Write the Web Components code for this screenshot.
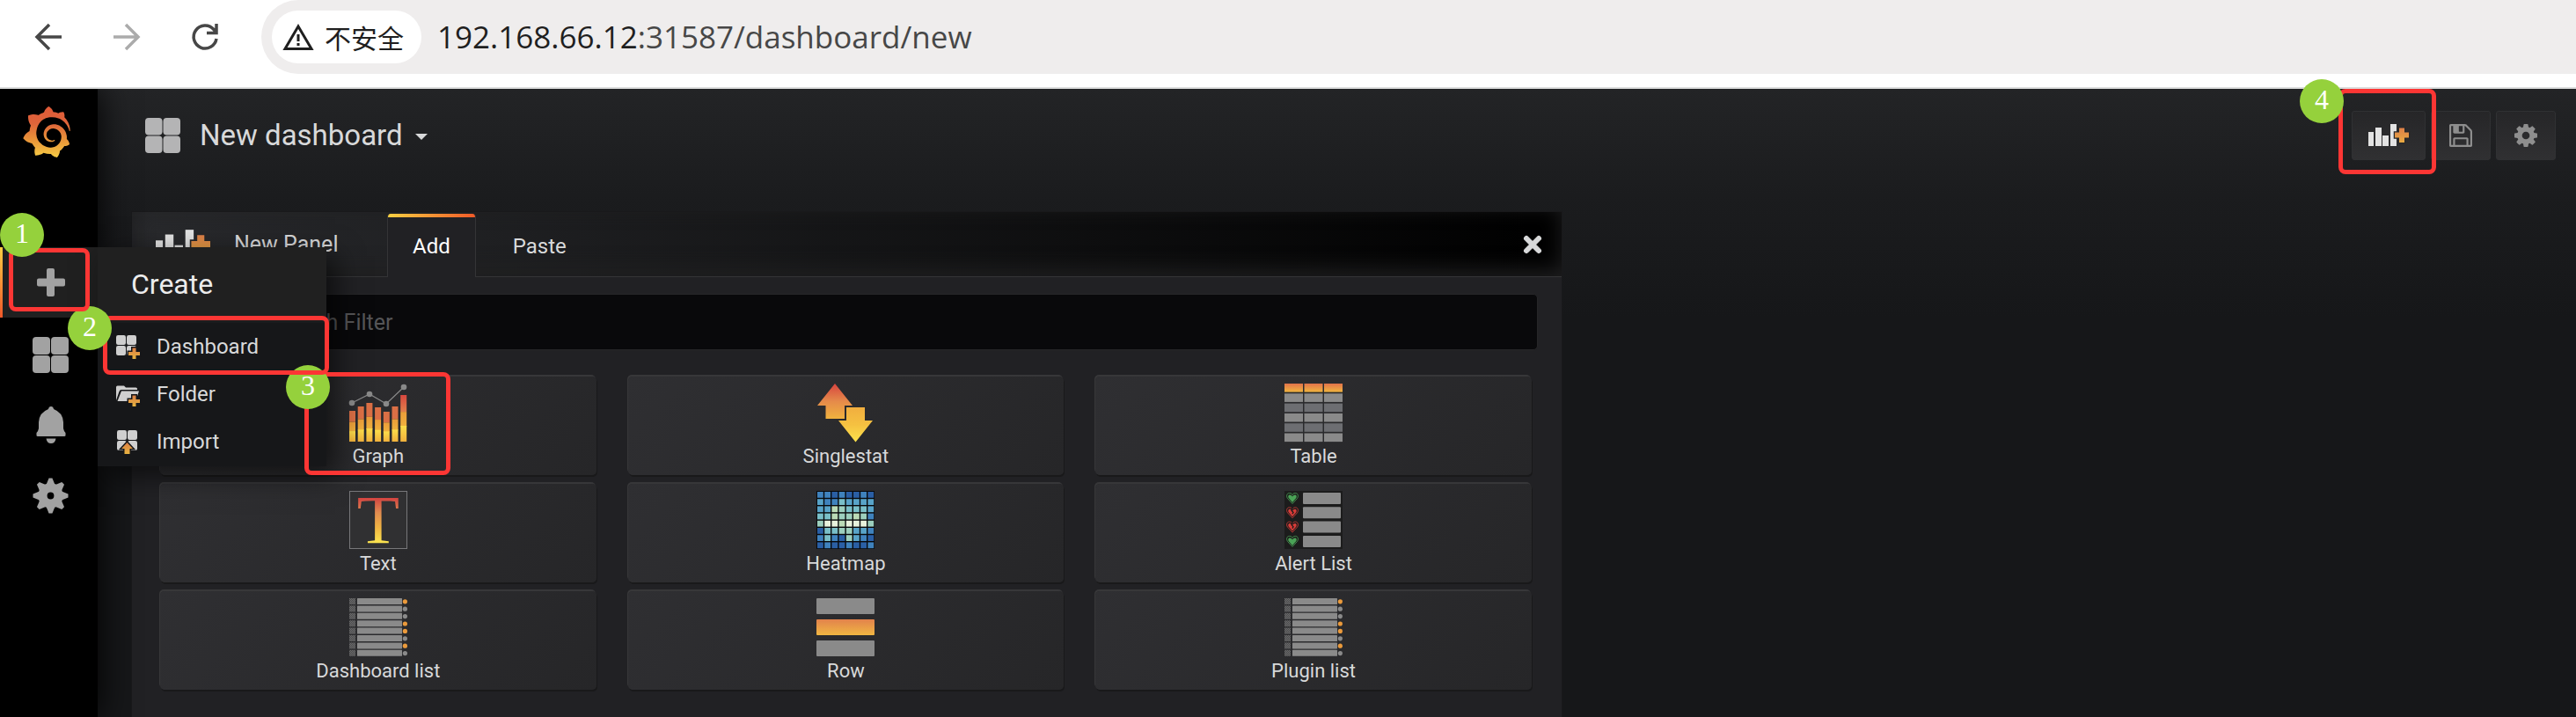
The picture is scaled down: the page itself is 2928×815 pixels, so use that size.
<!DOCTYPE html>
<html lang="en">
<head>
<meta charset="utf-8">
<title>New dashboard</title>
<style>
  body {
    margin: 0;
    background: #161719;
    font-family: Roboto, "Liberation Sans", sans-serif;
    color: #d8d9da;
  }
</style>
</head>
<body>
<dashboard-app></dashboard-app>

<script>
const GEAR = 'M1024 896q0-106-75-181t-181-75-181 75-75 181 75 181 181 75 181-75 75-181zm512-109v222q0 12-8 23t-20 13l-185 28q-19 54-39 91 35 50 107 138 10 12 10 25t-9 23q-27 37-99 108t-94 71q-12 0-26-9l-138-108q-44 23-91 38-16 136-29 186-7 28-36 28h-222q-14 0-24.5-8.5t-11.5-21.5l-28-184q-49-16-90-37l-141 107q-10 9-25 9-14 0-25-11-126-114-165-168-7-10-7-23 0-12 8-23 15-21 51-66.5t54-70.5q-27-50-41-99l-183-27q-13-2-21-12.5t-8-23.5v-222q0-12 8-23t19-13l186-28q14-46 39-92-40-57-107-138-10-12-10-24 0-10 9-23 26-36 98.5-107.5t94.5-71.5q13 0 26 10l138 107q44-23 91-38 16-136 29-186 7-28 36-28h222q14 0 24.5 8.5t11.5 21.5l28 184q49 16 90 37l142-107q9-9 24-9 13 0 25 10 129 119 165 170 7 8 7 22 0 12-8 23-15 21-51 66.5t-54 70.5q26 50 41 98l183 28q13 2 21 12.5t8 23.5z';

const FLOPPY = 'M384 1536h768v-384h-768v384zm896 0h128v-896q0-14-10-38.5t-20-34.5l-281-281q-10-10-34-20t-39-10v416q0 40-28 68t-68 28h-576q-40 0-68-28t-28-68v-416h-128v1280h128v-416q0-40 28-68t68-28h832q40 0 68 28t28 68v416zm-384-928v-320q0-13-9.5-22.5t-22.5-9.5h-192q-13 0-22.5 9.5t-9.5 22.5v320q0 13 9.5 22.5t22.5 9.5h192q13 0 22.5-9.5t9.5-22.5zm640 32v928q0 40-28 68t-68 28h-1344q-40 0-68-28t-28-68v-1344q0-40 28-68t68-28h928q40 0 88 20t76 48l280 280q28 28 48 76t20 88z';

const LOGO = 'M23.02 10.59a8.578 8.578 0 0 0-.862-3.034 8.911 8.911 0 0 0-1.789-2.445c.337-1.342-.413-2.505-.413-2.505-1.292-.08-2.113.4-2.416.62-.052-.02-.102-.044-.154-.064-.22-.089-.446-.172-.677-.247-.231-.073-.47-.14-.711-.197a9.867 9.867 0 0 0-.875-.161C14.557.753 12.94 0 12.94 0c-1.804 1.145-2.147 2.744-2.147 2.744l-.018.093c-.098.029-.2.057-.298.088-.138.042-.275.094-.413.143-.138.055-.275.107-.41.166a8.869 8.869 0 0 0-1.557.87l-.063-.029c-2.497-.955-4.716.195-4.716.195-.203 2.658.996 4.33 1.235 4.636a11.608 11.608 0 0 0-.607 2.635C1.636 12.677.953 15.014.953 15.014c1.926 2.214 4.171 2.351 4.171 2.351.003-.002.006-.002.006-.005.285.509.615.994.986 1.446.156.19.32.371.488.548-.704 2.009.099 3.68.099 3.68 2.144.08 3.553-.937 3.849-1.173a9.784 9.784 0 0 0 3.164.501h.08l.055-.003.107-.002.103-.005.003.002c1.01 1.44 2.788 1.646 2.788 1.646 1.264-1.332 1.337-2.653 1.337-2.94v-.058c0-.02-.003-.039-.003-.06.265-.187.52-.387.758-.6a7.875 7.875 0 0 0 1.415-1.7c1.43.083 2.437-.885 2.437-.885-.236-1.49-1.085-2.216-1.264-2.354l-.018-.013-.016-.013a.217.217 0 0 1-.031-.02c.008-.092.016-.18.02-.27.011-.162.016-.323.016-.48v-.253l-.005-.098-.008-.135a1.891 1.891 0 0 0-.01-.13c-.003-.042-.008-.083-.013-.125l-.016-.124-.018-.122a6.215 6.215 0 0 0-2.032-3.73 6.015 6.015 0 0 0-3.222-1.46 6.292 6.292 0 0 0-.85-.048l-.107.002h-.063l-.044.003-.104.008a4.777 4.777 0 0 0-3.335 1.695c-.332.4-.592.84-.768 1.297a4.594 4.594 0 0 0-.312 1.817l.003.091c.005.055.007.11.013.164a3.615 3.615 0 0 0 .698 1.82 3.53 3.53 0 0 0 1.827 1.282c.33.098.66.14.971.137.039 0 .078 0 .114-.002l.063-.003c.02 0 .041-.003.062-.003.034-.002.065-.007.099-.01.007 0 .018-.003.028-.003l.031-.005.06-.008a1.18 1.18 0 0 0 .112-.02c.036-.008.072-.013.109-.024a2.634 2.634 0 0 0 .914-.415c.028-.02.056-.041.085-.065a.248.248 0 0 0 .039-.35.244.244 0 0 0-.309-.06l-.078.042c-.09.044-.184.083-.283.116a2.476 2.476 0 0 1-.475.096c-.028.003-.054.006-.083.006l-.083.002c-.026 0-.054 0-.08-.002l-.102-.006h-.012l-.024.006c-.016-.003-.031-.003-.044-.006-.031-.002-.06-.007-.091-.01a2.59 2.59 0 0 1-.724-.213 2.557 2.557 0 0 1-.667-.438 2.52 2.52 0 0 1-.805-1.475 2.306 2.306 0 0 1-.029-.444l.006-.122v-.023l.002-.031c.003-.021.003-.04.005-.06a3.163 3.163 0 0 1 1.352-2.29 3.12 3.12 0 0 1 .937-.43 2.946 2.946 0 0 1 .776-.101h.06l.07.002.045.003h.026l.07.005a4.041 4.041 0 0 1 1.635.49 3.94 3.94 0 0 1 1.602 1.662 3.77 3.77 0 0 1 .397 1.414l.005.076.003.075c.002.026.002.05.002.075 0 .024.003.052 0 .07v.065l-.002.073-.008.174a6.195 6.195 0 0 1-.08.639 5.1 5.1 0 0 1-.267.927 5.31 5.31 0 0 1-.624 1.13 5.052 5.052 0 0 1-3.237 2.014 4.82 4.82 0 0 1-.649.066l-.039.003h-.287a6.607 6.607 0 0 1-1.716-.265 6.776 6.776 0 0 1-3.4-2.274 6.75 6.75 0 0 1-.746-1.15 6.616 6.616 0 0 1-.714-2.596l-.005-.083-.002-.02v-.056l-.003-.073v-.096l-.003-.104v-.07l.003-.163c.008-.22.026-.45.054-.678a8.707 8.707 0 0 1 .28-1.355c.128-.444.286-.872.473-1.277a7.04 7.04 0 0 1 1.456-2.1 5.925 5.925 0 0 1 .953-.763c.169-.111.343-.213.524-.306.089-.05.182-.091.273-.135.047-.02.093-.042.138-.062a7.177 7.177 0 0 1 .714-.267l.145-.045c.049-.015.098-.026.148-.041.098-.029.197-.052.296-.076.049-.013.1-.02.15-.033l.15-.032.151-.028.076-.013.075-.01.153-.024c.057-.01.114-.013.171-.023l.169-.021c.036-.003.073-.008.106-.01l.073-.008.036-.003.042-.002c.057-.003.114-.008.171-.01l.086-.006h.023l.037-.003.145-.007a7.999 7.999 0 0 1 1.708.125 7.917 7.917 0 0 1 2.048.68 8.253 8.253 0 0 1 1.672 1.09l.09.077.089.078c.06.052.114.107.171.159.057.052.112.106.166.16.052.055.107.107.159.164a8.671 8.671 0 0 1 1.41 1.978c.012.026.028.052.04.078l.04.078.075.156c.023.051.05.1.07.153l.065.15a8.848 8.848 0 0 1 .45 1.34.19.19 0 0 0 .201.142.186.186 0 0 0 .172-.184c.01-.246.002-.532-.024-.856z';

const stops = (colors) =>
  colors.map((c, i) => `<stop offset="${i / (colors.length - 1)}" stop-color="${c}"/>`).join('');

// gradients are repeated in every icon because ids do not cross shadow roots
const gradient = (id, ...colors) =>
  `<linearGradient id="${id}" x1="0" y1="0" x2="0" y2="1">${stops(colors)}</linearGradient>`;

const rect = (x, y, w, h, fill, extra = '') =>
  `<rect x="${x}" y="${y}" width="${w}" height="${h}" fill="${fill}" ${extra}/>`;

const squares = (size, gap, fill) => [[0, 0], [1, 0], [0, 1], [1, 1]].map(([x, y]) =>
  rect(x * (size + gap), y * (size + gap), size, size, fill, `rx="${size / 5}"`)).join('');

const spokes = () => {
  let out = '';
  for (let i = 0; i < 8; i++) {
    out += `<path d="M16 8 L19 0.5 H23 L26 8 Z" transform="rotate(${i * 45} 21 21)"/>`;
  }
  return out;
};

const graphIcon = () => {
  const tops = [31, 26, 22, 27, 32, 26, 13];
  let out = gradient('low', '#fbdd4a', '#f1b13c') + gradient('mid', '#eb9c39', '#f0b23e') + gradient('high', '#d8473f', '#e2804b');
  tops.forEach((top, i) => {
    const x = i * 9.7;
    const h = 66 - top;
    out += rect(x, top, 7, h * 0.36, i === 6 ? 'url(#high)' : '#db6f45');
    out += rect(x, top + h * 0.36, 7, h * 0.32, 'url(#mid)');
    out += rect(x, top + h * 0.66, 7, h * 0.34, 'url(#low)');
  });
  out += '<path d="M3 22 L23 12 L42 23 L62 4" fill="none" stroke="#898989" stroke-width="1.2"/>';
  [[3, 22], [23, 12], [42, 23], [62, 4]].forEach(([x, y]) => {
    out += `<circle cx="${x}" cy="${y}" r="3.3" fill="#898989"/>`;
  });
  return out;
};

const tableIcon = () => {
  let out = gradient('g', '#e2734b', '#f0b43f');
  for (let row = 0; row < 6; row++) {
    for (let col = 0; col < 3; col++) {
      const fill = row === 0 ? 'url(#g)' : row % 2 ? '#8a8a8a' : '#6d6e72';
      out += rect(col * 22.5, row * 11.3, 21, 9.6, fill);
    }
  }
  return out;
};

const heatmapIcon = () => {
  const shades = ['#2a5fa5', '#3f82bd', '#58a3c8', '#79bfc8', '#9ccfbd', '#bbdbb6', '#e8f2dc'];
  const cells = ['11010010', '21132222', '22543332', '33544541', '46656664', '03344221', '13104210', '01001001'];
  let out = rect(0, 0, 66, 66, '#08090b');
  cells.forEach((line, y) => {
    [...line].forEach((n, x) => {
      out += rect(x * 8.2 + 1, y * 8.2 + 1, 6.8, 6.8, shades[n]);
    });
  });
  return out;
};

const alertIcon = () => {
  let out = rect(0, 0, 66, 66, '#1c1c1c');
  ['#4aa356', '#d63c38', '#d63c38', '#4aa356'].forEach((color, i) => {
    const y = i * 16.3;
    out += rect(21, y + 2, 43, 13, '#8a8a8a', 'rx="1"');
    out += `<g transform="translate(2 ${y + 2})">
      <path d="M7 12.5 L1.5 6.5 C-.5 3.5 1 .5 3.5 .5 C5.5 .5 6.5 1.5 7 2.5 C7.5 1.5 8.5 .5 10.5 .5 C13 .5 14.5 3.5 12.5 6.5Z" fill="none" stroke="${color}" stroke-width=".8"/>
      <path d="M7 11 L3 6.5 C1.5 4.5 2.5 2.5 4 2.5 C5.5 2.5 6.5 3.5 7 4.5 C7.5 3.5 8.5 2.5 10 2.5 C11.5 2.5 12.5 4.5 11 6.5Z" fill="${color}"/>
      ${color === '#d63c38' ? '<path d="M7 1 L6 4 L8 6 L7 8" fill="none" stroke="#1c1c1c" stroke-width="1.3"/>' : ''}
    </g>`;
  });
  return out;
};

const listIcon = () => {
  let out = '<pattern id="dots" width="2" height="2" patternUnits="userSpaceOnUse"><rect width="2" height="2" fill="#484849"/><rect width="1" height="1" fill="#6c6c6d"/><rect x="1" y="1" width="1" height="1" fill="#6c6c6d"/></pattern>';
  [1, 0, 0, 1, 1, 0, 1, 0].forEach((on, i) => {
    const y = i * 8.4;
    out += rect(0, y, 7, 7, 'url(#dots)');
    out += rect(9, y, 51, 7, '#8a8a8a', 'rx=".6"');
    out += `<circle cx="63.4" cy="${y + 3.8}" r="2.6" fill="${on ? '#eb9a3b' : '#8a8a8a'}"/>`;
  });
  return out;
};

// name: [viewBox, markup]
const icons = {
  back: ['0 0 30 30', '<path d="M30 15H3M16 1 L2 15 L16 29" fill="none" stroke="#474747" stroke-width="3.5"/>'],
  forward: ['0 0 30 30', '<path d="M0 15H27M14 1 L28 15 L14 29" fill="none" stroke="#ababab" stroke-width="3.5"/>'],
  reload: ['0 0 30 30', '<path d="M28 17 A13 13 0 1 1 25 6.5 L28 10M28 0V10.5H17" fill="none" stroke="#474747" stroke-width="3.5"/>'],
  warning: ['0 0 36 32', '<path d="M18 4 L33 29.5 H3Z" fill="none" stroke="#1f1f1f" stroke-width="3"/><path d="M18 13V21M18 23V26" stroke="#1f1f1f" stroke-width="3"/>'],
  logo: ['0.9 0 22.2 24', gradient('g', '#e05a38', '#de643a', '#e99639', '#f7cd45') + `<path fill="url(#g)" d="${LOGO}"/>`],
  plus: ['0 0 32 32', '<path d="M11 2Q11 0 13 0H18Q20 0 20 2V11.5H30Q32 11.5 32 13.5V18.5Q32 20.5 30 20.5H20V30Q20 32 18 32H13Q11 32 11 30V20.5H2Q0 20.5 0 18.5V13.5Q0 11.5 2 11.5H11Z" fill="#a2a2a2"/>'],
  apps: ['0 0 41 41', squares(20, 1, 'currentColor')],
  bell: ['0 0 34 42', '<path d="M17 0Q19.5 0 20 3Q30.5 7 31 18V25Q31.5 28 33.5 30V33Q33.5 34 32 34H2Q.5 34 .5 33V30Q2.5 28 3 25V18Q3.5 7 14 3Q14.5 0 17 0ZM11.5 36.5H22.5Q21.5 42 17 42T11.5 36.5Z" fill="#a2a2a2"/>'],
  cog: ['0 0 42 42', `<g fill="#a2a2a2">${spokes()}<path fill-rule="evenodd" d="M21 6.5a14.5 14.5 0 1 0 0 29a14.5 14.5 0 1 0 0-29zM21 17a4 4 0 1 1 0 8a4 4 0 1 1 0-8z"/></g>`],
  gear: ['0 128 1536 1536', `<path fill="#8e8e8e" d="${GEAR}"/>`],
  save: ['0 128 1536 1536', `<path fill="#8e8e8e" d="${FLOPPY}"/>`],
  close: ['0 0 22 22', '<path d="M4 4 L18 18 M18 4 L4 18" stroke="#d8d9da" stroke-width="6" stroke-linecap="round"/>'],
  'add-panel': ['0 0 46 25', gradient('g', '#de8048', '#e9aa42') +
    rect(0, 9, 6, 16, '#e3e3e3') + rect(8, 4, 7, 21, '#e3e3e3') + rect(16, 13, 7, 12, '#e3e3e3') + rect(25, 0, 7, 25, '#e3e3e3') +
    '<path d="M35 4.5H41V9.5H46V15.5H41V21H35V15.5H30V9.5H35Z" fill="url(#g)" stroke="#28282a" stroke-width="2.5" paint-order="stroke"/>'],
  'new-dash': ['0 0 27 27', gradient('g', '#dd8045', '#e5b440') + squares(11, 1, '#cfcfcf') +
    '<path d="M18.5 14.5H22.5V19H27V23H22.5V27H18.5V23H14V19H18.5Z" fill="url(#g)" stroke="#161719" stroke-width="3" paint-order="stroke"/>'],
  folder: ['0 0 27 27', gradient('g', '#dd8045', '#e5b440') +
    '<path d="M0 5Q0 3.5 1.5 3.5H9L11 5.5H22.5Q24 5.5 24 7V8H6Q4 8 3.5 10L0 20ZM6 9.5H26L22 21H1.5Z" fill="#cfcfcf"/>' +
    '<path d="M18.5 14.5H22.5V19H27V23H22.5V27H18.5V23H14V19H18.5Z" fill="url(#g)" stroke="#161719" stroke-width="3" paint-order="stroke"/>'],
  import: ['0 0 27 27', gradient('g', '#dd7f45', '#e8b440') + `<g transform="translate(1 0)">${squares(11, 1, '#cfcfcf')}</g>` +
    '<path d="M12.5 14 L19 21H15.5V27H9.5V21H6Z" fill="url(#g)" stroke="#161719" stroke-width="3" paint-order="stroke"/>'],
  graph: ['0 0 66 66', graphIcon()],
  singlestat: ['0 0 66 66', gradient('a', '#d7433f', '#e58a4a', '#f0b23e') + gradient('b', '#f1ae3f', '#f5c141', '#fce24c') +
    '<path d="M21 0 L41 25H32V40H10.5V25H1Z" fill="url(#a)"/><path d="M34 27H55V42H64 L44.5 66.5 L25 42H34Z" fill="url(#b)" stroke="#2a2a2c" stroke-width="3" paint-order="stroke"/>'],
  table: ['0 0 66 66', tableIcon()],
  text: ['0 0 66 66', `<linearGradient id="g" gradientUnits="userSpaceOnUse" x1="0" y1="7" x2="0" y2="59">${stops(['#d23f40', '#e08a50', '#f0b443', '#fbe44f'])}</linearGradient>` +
    rect(0.5, 0.5, 65, 65, '#303032', 'stroke="#77777a"') +
    '<text x="33" y="59" text-anchor="middle" font-family="Liberation Serif, serif" font-size="79" fill="url(#g)">T</text>'],
  heatmap: ['0 0 66 66', heatmapIcon()],
  alert: ['0 0 66 66', alertIcon()],
  list: ['0 0 66 66', listIcon()],
  row: ['0 0 66 66', gradient('g', '#e2824c', '#f0b642') + rect(0, 0, 66, 18, '#8a8a8a', 'rx="1"') + rect(0, 24, 66, 18, 'url(#g)', 'rx="1"') + rect(0, 48, 66, 18, '#8a8a8a', 'rx="1"')]
};

class AppIcon extends HTMLElement {
  connectedCallback() {
    const [box, markup] = icons[this.getAttribute('name')];
    this.attachShadow({ mode: 'open' }).innerHTML = `
      <style>
        :host { display: block; flex: none; }
        svg { display: block; width: 100%; height: 100%; overflow: visible; }
      </style>
      <svg viewBox="${box}" aria-hidden="true">${markup}</svg>
    `;
  }
}

// small helper for the elements that only have static markup
const define = (name, html) => {
  const template = document.createElement('template');
  template.innerHTML = html;

  window.customElements.define(name, class extends HTMLElement {
    constructor() {
      super();
      this.attachShadow({ mode: 'open' });
      this.shadowRoot.appendChild(template.content.cloneNode(true));
    }
  });
};

window.customElements.define('app-icon', AppIcon);

define('browser-bar', `
  <style>
    :host {
      display: flex;
      align-items: flex-start;
      height: 99px;
      padding-left: 40px;
      background: #fff;
      border-bottom: 2px solid #dcdddd;
    }
    .controls { display: flex; gap: 59px; padding: 27px 49px 0 0; }
    button { padding: 0; border: 0; background: none; }
    .controls app-icon { width: 30px; height: 30px; }
    .address {
      display: flex;
      flex: 1;
      align-items: center;
      gap: 18px;
      height: 84px;
      padding-left: 12px;
      box-sizing: border-box;
      background: #efeded;
      border-radius: 42px 0 0 42px;
      font: 35px "Open Sans", "Noto Sans", sans-serif;
      color: #474747;
      white-space: nowrap;
    }
    .address span { padding-bottom: 2px; }
    .safety {
      display: flex;
      align-items: center;
      gap: 12px;
      height: 60px;
      padding: 0 20px 0 12px;
      border-radius: 30px;
      background: #fff;
      font: 30px "Noto Sans CJK SC", sans-serif;
      color: #1f1f1f;
    }
    .safety app-icon { width: 36px; height: 32px; }
    b { font-weight: normal; color: #1f1f1f; }
  </style>
  <div class="controls">
    <button aria-label="Back"><app-icon name="back"></app-icon></button>
    <button aria-label="Forward"><app-icon name="forward"></app-icon></button>
    <button aria-label="Reload"><app-icon name="reload"></app-icon></button>
  </div>
  <div class="address">
    <button class="safety"><app-icon name="warning"></app-icon>不安全</button>
    <span><b>192.168.66.12</b>:31587/dashboard/new</span>
  </div>
`);

define('create-menu', `
  <style>
    :host {
      display: block;
      width: 260px;
      background: #161719;
      box-shadow: 10px 10px 30px rgba(0, 0, 0, .6);
    }
    h2 {
      margin: 0;
      padding: 0 38px;
      background: #202020;
      border-bottom: 2px solid #1b1c1d;
      font-size: 32px;
      font-weight: 400;
      line-height: 84px;
      color: #ececec;
    }
    a {
      display: flex;
      align-items: center;
      gap: 19px;
      height: 54px;
      padding-left: 21px;
      font-size: 24px;
      color: #d8d9da;
      text-decoration: none;
    }
    a app-icon { width: 27px; height: 27px; }
    nav { padding-bottom: 1px; }
  </style>
  <h2>Create</h2>
  <nav>
    <a href="#dashboard"><app-icon name="new-dash"></app-icon>Dashboard</a>
    <a href="#folder"><app-icon name="folder"></app-icon>Folder</a>
    <a href="#import"><app-icon name="import"></app-icon>Import</a>
  </nav>
`);

define('side-nav', `
  <style>
    :host {
      display: block;
      width: 111px;
      background: #000;
      box-shadow: 0 0 36px #000;
      color: #a2a2a2;
    }
    a {
      display: flex;
      align-items: center;
      justify-content: center;
      height: 80px;
      padding-left: 4px;
      color: inherit;
    }
    .logo { height: 160px; padding: 20px 6px 0 0; align-items: flex-start; }
    .logo app-icon { width: 54px; height: 58px; }
    .item { position: relative; margin-bottom: 2px; }
    .active {
      background: #202020;
      border-left: 3px solid;
      border-image: linear-gradient(#fbd043, #f0562a) 1;
      padding-left: 1px;
    }
    .square { width: 41px; height: 41px; }
    .plus { width: 32px; height: 32px; }
    .bell { width: 34px; height: 42px; }
    create-menu { position: absolute; top: 0; left: 100%; }
  </style>
  <nav>
    <a class="logo" href="#home" aria-label="Home"><app-icon name="logo"></app-icon></a>
    <div class="item">
      <a class="active" href="#create" aria-label="Create"><app-icon class="plus" name="plus"></app-icon></a>
      <create-menu></create-menu>
    </div>
    <a href="#dashboards" aria-label="Dashboards"><app-icon class="square" name="apps"></app-icon></a>
    <a href="#alerting" aria-label="Alerting"><app-icon class="bell" name="bell"></app-icon></a>
    <a href="#configuration" aria-label="Configuration"><app-icon class="square" name="cog"></app-icon></a>
  </nav>
`);

define('dash-toolbar', `
  <style>
    :host {
      display: flex;
      align-items: center;
      gap: 6px;
      height: 105px;
      padding: 0 23px 0 54px;
    }
    .title {
      display: flex;
      align-items: center;
      gap: 22px;
      margin-right: auto;
      padding: 0;
      border: 0;
      background: none;
      font: 33px Roboto, sans-serif;
      color: #d8d9da;
    }
    .title app-icon { width: 40px; height: 40px; color: #b4b4b5; }
    .title span { display: flex; align-items: center; gap: 14px; }
    .title span::after {
      content: "";
      margin-top: 4px;
      border: 7px solid transparent;
      border-top-color: #d8d9da;
      border-bottom: 0;
    }
    .btn {
      display: flex;
      align-items: center;
      justify-content: center;
      width: 68px;
      height: 56px;
      padding: 0;
      border: 1px solid #303133;
      border-radius: 3px;
      background: linear-gradient(#262628, #303032);
    }
    .wide { width: 84px; }
    .btn app-icon { width: 26px; height: 26px; }
    .wide app-icon { width: 46px; height: 25px; }
  </style>
  <button class="title"><app-icon name="apps"></app-icon><span>New dashboard</span></button>
  <button class="btn wide" aria-label="Add panel"><app-icon name="add-panel"></app-icon></button>
  <button class="btn" aria-label="Save dashboard"><app-icon name="save"></app-icon></button>
  <button class="btn" aria-label="Dashboard settings"><app-icon name="gear"></app-icon></button>
`);

define('panel-card', `
  <style>
    :host { display: block; }
    button {
      display: flex;
      flex-direction: column;
      align-items: center;
      gap: 3px;
      width: 100%;
      height: 112px;
      padding: 8px 0 0;
      border: 0;
      border-radius: 5px;
      background: linear-gradient(135deg, #2f2f32, #262628);
      box-shadow: -1px -2px 0 #373739, 1px 2px 0 #19191a;
      font: 22px/28px Roboto, sans-serif;
      color: #d8d9da;
    }
    ::slotted(app-icon) { width: 66px; height: 66px; }
  </style>
  <button><slot name="icon"></slot><slot></slot></button>
`);

define('add-panel', `
  <style>
    :host {
      display: block;
      width: 59%;
      background: #212124;
      box-shadow: 0 0 0 1px #19191b;
    }
    header {
      display: flex;
      height: 73px;
      padding: 0 22px 0 27px;
      border-bottom: 1px solid #343436;
      background: linear-gradient(90deg, #292a2d, #000);
      box-shadow: inset 0 -7px 23px #1f1f20;
      font-size: 24px;
    }
    .name { display: flex; align-items: center; gap: 27px; width: 263px; box-sizing: border-box; font-size: 25px; }
    .name app-icon { width: 62px; height: 34px; }
    button {
      padding: 2px 28px 0;
      border: 0;
      background: none;
      font: 24px Roboto, sans-serif;
      color: #d8d9da;
    }
    .tabs { display: flex; flex: 1; gap: 14px; margin: 2px 0 -1px; }
    .current {
      position: relative;
      border: 1px solid #343436;
      border-width: 0 1px;
      border-radius: 4px 4px 0 0;
      overflow: hidden;
      background: #212124;
      color: #fff;
    }
    .current::before {
      content: "";
      position: absolute;
      inset: 0 0 auto;
      height: 4px;
      background: linear-gradient(90deg, #f9d042, #f05a28);
    }
    .close { padding: 0; }
    .close app-icon { width: 22px; height: 22px; }
    .body { padding: 19px 27px 32px 30px; }
    input {
      display: block;
      width: 100%;
      height: 64px;
      margin-bottom: 30px;
      padding: 0 58px;
      box-sizing: border-box;
      border: 1px solid #262628;
      border-radius: 5px;
      background: #09090b;
      font: 25px Roboto, sans-serif;
      color: #d8d9da;
    }
    input::placeholder { color: #555557; opacity: 1; }
    .grid {
      display: grid;
      grid-template-columns: repeat(3, 1fr);
      gap: 10px 36px;
      padding: 0 7px 0 2px;
    }
  </style>
  <header>
    <div class="name"><app-icon name="add-panel"></app-icon>New Panel</div>
    <div class="tabs">
      <button class="current">Add</button>
      <button>Paste</button>
    </div>
    <button class="close" aria-label="Close"><app-icon name="close"></app-icon></button>
  </header>
  <div class="body">
    <input type="text" placeholder="Panel Search Filter" aria-label="Panel Search Filter">
    <div class="grid"><slot></slot></div>
  </div>
`);

// numbered walkthrough step: red frame with a green badge near its corner
define('step-mark', `
  <style>
    :host {
      display: block;
      position: absolute;
      box-sizing: border-box;
      border: 5px solid #fc3634;
      border-radius: 8px;
      pointer-events: none;
    }
    span {
      position: absolute;
      left: var(--badge-x);
      top: var(--badge-y);
      width: 50px;
      height: 50px;
      border-radius: 50%;
      background: #95d13c;
      font: 32px/47px "Liberation Serif", serif;
      text-align: center;
      color: #fff;
    }
  </style>
  <span><slot></slot></span>
`);

define('dashboard-app', `
  <style>
    :host {
      display: flex;
      flex-direction: column;
      position: relative;
      min-height: 100vh;
      overflow: hidden;
    }
    browser-bar { position: relative; z-index: 2; }
    .shell { display: flex; flex: 1; }
    side-nav { position: relative; z-index: 1; flex: none; }
    main {
      display: flex;
      flex: 1;
      flex-direction: column;
      min-width: 0;
      background: linear-gradient(#232426, #1b1c1e 120px, #161719 260px);
    }
    .canvas { display: flex; flex: 1; padding: 35px 24px 0 39px; }
    step-mark { z-index: 3; }
    .s1 { left: 10px; top: 282px; width: 92px; height: 72px; --badge-x: -15px; --badge-y: -45px; }
    .s2 { left: 117px; top: 359px; width: 257px; height: 67px; --badge-x: -45px; --badge-y: -16px; }
    .s3 { left: 346px; top: 423px; width: 166px; height: 117px; --badge-x: -26px; --badge-y: -13px; }
    .s4 { right: 159px; top: 101px; width: 111px; height: 97px; --badge-x: -49px; --badge-y: -16px; }
  </style>
  <browser-bar></browser-bar>
  <div class="shell">
    <side-nav></side-nav>
    <main>
      <dash-toolbar></dash-toolbar>
      <div class="canvas">
        <add-panel>
          <panel-card><app-icon slot="icon" name="graph"></app-icon>Graph</panel-card>
          <panel-card><app-icon slot="icon" name="singlestat"></app-icon>Singlestat</panel-card>
          <panel-card><app-icon slot="icon" name="table"></app-icon>Table</panel-card>
          <panel-card><app-icon slot="icon" name="text"></app-icon>Text</panel-card>
          <panel-card><app-icon slot="icon" name="heatmap"></app-icon>Heatmap</panel-card>
          <panel-card><app-icon slot="icon" name="alert"></app-icon>Alert List</panel-card>
          <panel-card><app-icon slot="icon" name="list"></app-icon>Dashboard list</panel-card>
          <panel-card><app-icon slot="icon" name="row"></app-icon>Row</panel-card>
          <panel-card><app-icon slot="icon" name="list"></app-icon>Plugin list</panel-card>
        </add-panel>
      </div>
    </main>
  </div>
  <step-mark class="s3">3</step-mark>
  <step-mark class="s2">2</step-mark>
  <step-mark class="s1">1</step-mark>
  <step-mark class="s4">4</step-mark>
`);
</script>
</body>
</html>
